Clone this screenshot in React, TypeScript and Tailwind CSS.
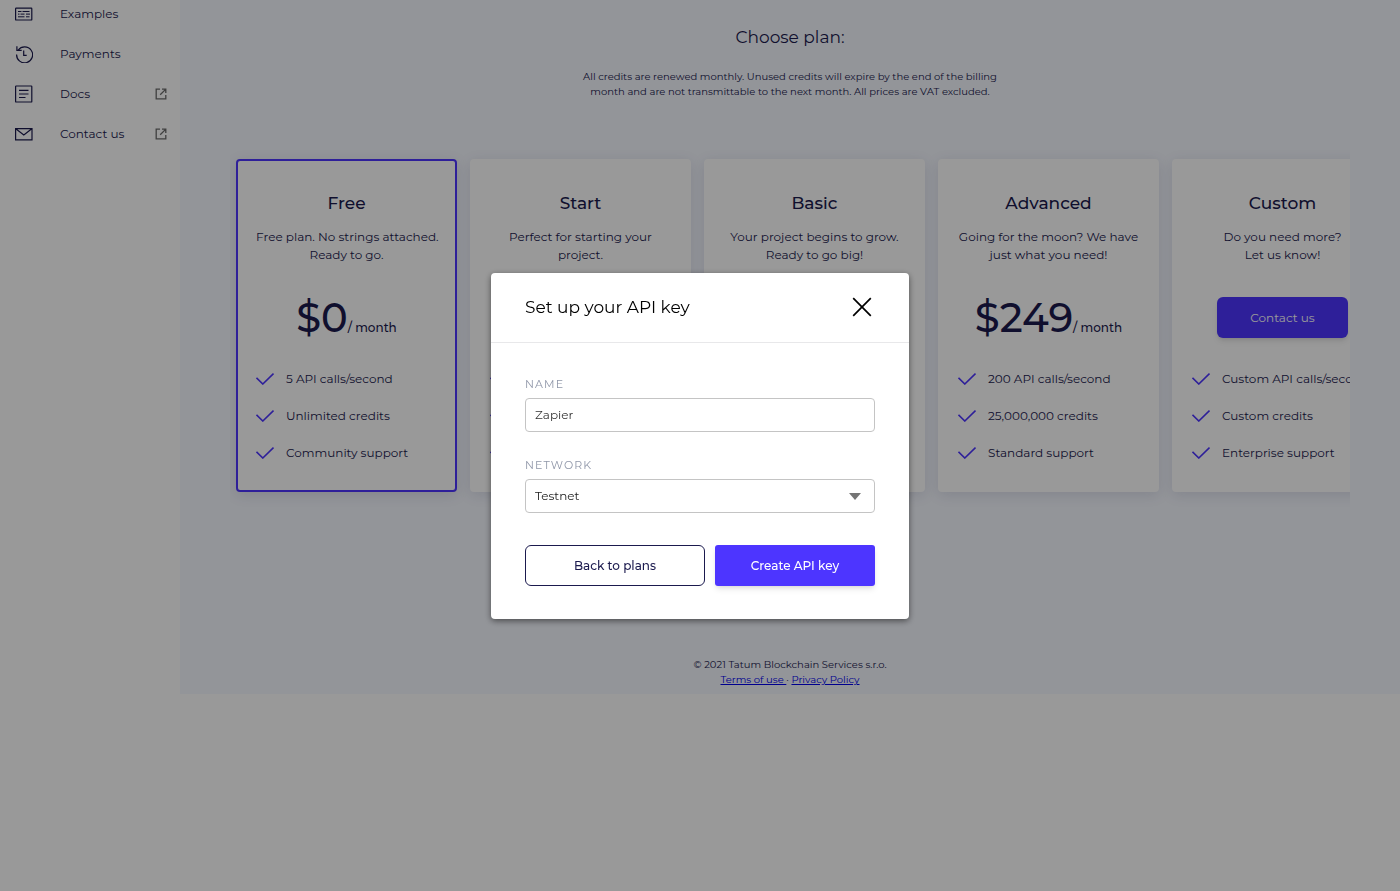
import React, { FC, ReactNode, useState } from "react";

type Plan = {
  name: string;
  text: [string, string];
  price?: string;
  features: string[];
  active?: boolean;
};

const plans: Plan[] = [
  {
    name: "Free",
    text: ["Free plan. No strings attached.", "Ready to go."],
    price: "$0",
    features: ["5 API calls/second", "Unlimited credits", "Community support"],
    active: true,
  },
  {
    name: "Start",
    text: ["Perfect for starting your", "project."],
    price: "$9",
    features: ["10 API calls/second", "1,000,000 credits", "Standard support"],
  },
  {
    name: "Basic",
    text: ["Your project begins to grow.", "Ready to go big!"],
    price: "$49",
    features: ["50 API calls/second", "5,000,000 credits", "Standard support"],
  },
  {
    name: "Advanced",
    text: ["Going for the moon? We have", "just what you need!"],
    price: "$249",
    features: ["200 API calls/second", "25,000,000 credits", "Standard support"],
  },
  {
    name: "Custom",
    text: ["Do you need more?", "Let us know!"],
    features: ["Custom API calls/second", "Custom credits", "Enterprise support"],
  },
];

const Icon: FC<{ children: ReactNode }> = ({ children }) => (
  <svg width="18" height="18" viewBox="0 0 18 18" fill="none" stroke="currentColor" strokeWidth="1.2" className="shrink-0" aria-hidden="true">
    {children}
  </svg>
);

const links = [
  {
    label: "Examples",
    icon: (
      <Icon>
        <rect x="0.6" y="3.2" width="16.2" height="11.8" rx="0.6" />
        <path d="M3 6.5h3.5M7.5 6.5h7M3 9.1h1.5M5.5 9.1h4M11 9.1h4M3 11.8h6.5M11 11.8h3.5" strokeWidth="1" />
      </Icon>
    ),
  },
  {
    label: "Payments",
    icon: (
      <Icon>
        <path d="M3.2 5A8 8 0 1 1 1.6 9.5M1.9 1.2v4.2h4.8M8.7 5.6v4.8h3" />
      </Icon>
    ),
  },
  {
    label: "Docs",
    external: true,
    icon: (
      <Icon>
        <rect x="0.6" y="1" width="16.2" height="16" rx="0.6" />
        <path d="M4 5.4h9.5M4 9h9.5M4 12.5h6.5" />
      </Icon>
    ),
  },
  {
    label: "Contact us",
    external: true,
    icon: (
      <Icon>
        <path d="M0.6 3.6h16.4v11.2H0.6zM0.8 3.8L8.8 10l8-6.2" />
      </Icon>
    ),
  },
];

const Sidebar: FC = () => (
  <aside className="w-[180px] shrink-0 bg-white">
    <nav className="flex flex-col gap-5 pt-1 pr-[13px] pl-[15px]">
      {links.map((link) => (
        <a key={link.label} href="#" className="flex h-5 items-center text-xs">
          {link.icon}
          <span className="ml-[27px] grow">{link.label}</span>
          {link.external && (
            <svg width="12" height="12" viewBox="0 0 12 12" fill="none" stroke="#6b6b6b" strokeWidth="1.3" aria-hidden="true">
              <path d="M5 1.2H1.2v9.6h9.6V7M7 1.2h3.8V5M10.6 1.4L5.2 6.8" />
            </svg>
          )}
        </a>
      ))}
    </nav>
  </aside>
);

const PlanCard: FC<{ plan: Plan }> = ({ plan }) => (
  <section
    className={`w-[221px] shrink-0 rounded border-2 bg-white px-[18px] pt-[30px] pb-[27px] shadow-[0_3px_14px_rgba(30,35,80,0.12)] ${
      plan.active ? "border-[#4d35ff]" : "border-white"
    }`}
  >
    <h2 className="text-center text-[17px] leading-6 font-medium">{plan.name}</h2>
    <p className="mt-[13px] text-center text-xs leading-[18px] whitespace-nowrap">
      {plan.text[0]}
      <br />
      {plan.text[1]}
    </p>
    <div className="mt-[33px] flex h-[41px] items-baseline justify-center">
      {plan.price ? (
        <>
          <span className="text-[40px] leading-[41px] font-medium">{plan.price}</span>
          <span className="text-xs font-medium">/ month</span>
        </>
      ) : (
        <button type="button" className="h-[41px] w-[131px] rounded-md bg-[#4d35ff] text-xs text-white shadow-md">
          Contact us
        </button>
      )}
    </div>
    <ul className="mt-[31px] flex flex-col gap-[17px]">
      {plan.features.map((feature) => (
        <li key={feature} className="flex h-5 items-center gap-3 text-xs whitespace-nowrap">
          <svg width="18" height="12" viewBox="0 0 18 12" fill="none" stroke="#4d35ff" strokeWidth="1.6" className="shrink-0" aria-hidden="true">
            <path d="M0.5 4.8L6.8 11L17.5 0.6" />
          </svg>
          {feature}
        </li>
      ))}
    </ul>
  </section>
);

const ApiKeyModal: FC = () => {
  const [name, setName] = useState<string>("Zapier");
  return (
    <div className="fixed inset-0 flex items-center justify-center bg-black/40">
      <form
        role="dialog"
        aria-labelledby="modal-title"
        onSubmit={(e) => e.preventDefault()}
        className="w-[418px] rounded bg-white shadow-[0_2px_6px_rgba(0,0,0,0.5)]"
      >
        <div className="flex h-[70px] items-center justify-between border-b border-[#e8e8ea] pr-[37px] pl-[34px]">
          <h1 id="modal-title" className="pt-0.5 text-[17px] text-black">Set up your API key</h1>
          <button type="button" aria-label="Close" className="text-black">
            <svg width="20" height="20" viewBox="0 0 20 20" fill="none" stroke="currentColor" strokeWidth="1.7" aria-hidden="true">
              <path d="M1.2 1.2l17.6 17.6M18.8 1.2L1.2 18.8" />
            </svg>
          </button>
        </div>
        <div className="px-[34px] py-[33px]">
          <label htmlFor="name" className="block text-[11px] leading-4 tracking-widest text-[#8f96a8]">NAME</label>
          <input
            id="name"
            value={name}
            onChange={(e) => setName(e.target.value)}
            className="mt-1.5 block h-[34px] w-full rounded border border-[#c4c4c4] px-[9px] text-xs text-[#333]"
          />
          <label htmlFor="network" className="mt-[25px] block text-[11px] leading-4 tracking-widest text-[#8f96a8]">NETWORK</label>
          <div className="relative mt-1.5">
            <select id="network" className="block h-[34px] w-full appearance-none rounded border border-[#c4c4c4] bg-white px-[9px] text-xs text-[#222]">
              <option>Testnet</option>
              <option>Mainnet</option>
            </select>
            <svg width="12" height="7" viewBox="0 0 12 7" className="pointer-events-none absolute top-3.5 right-3.5" aria-hidden="true">
              <path d="M0 0h12L6 7z" fill="#757575" />
            </svg>
          </div>
          <div className="mt-8 flex gap-2.5 text-xs font-medium">
            <button type="button" className="h-[41px] w-[180px] rounded-md border border-[#1b1a4e] pt-0.5">Back to plans</button>
            <button type="submit" className="h-[41px] grow rounded-[3px] bg-[#4d35ff] pt-0.5 text-white shadow-md">Create API key</button>
          </div>
        </div>
      </form>
    </div>
  );
};

const App: FC = () => (
  <div className="min-h-screen bg-white font-['Montserrat','Inter',sans-serif] text-[#1b1a4e]">
    <div className="flex">
      <Sidebar />
      <main className="min-w-0 grow bg-[#f5f8ff] px-[50px] pt-[25px] pb-[7px]">
        <h1 className="text-center text-[17px] leading-6">Choose plan:</h1>
        <p className="mt-5 text-center text-[10px] leading-[15px]">
          All credits are renewed monthly. Unused credits will expire by the end of the billing
          <br />
          month and are not transmittable to the next month. All prices are VAT excluded.
        </p>
        <div className="mt-10 flex gap-[13px] overflow-hidden py-5 pl-1.5">
          {plans.map((plan) => (
            <PlanCard key={plan.name} plan={plan} />
          ))}
        </div>
        <footer className="mt-[145px] text-center text-[10px] leading-[15px]">
          <p>© 2021 Tatum Blockchain Services s.r.o.</p>
          <p>
            <a href="#" className="text-[#0000ee] underline">Terms of use </a>
            {" · "}
            <a href="#" className="text-[#0000ee] underline">Privacy Policy</a>
          </p>
        </footer>
      </main>
    </div>
    <ApiKeyModal />
  </div>
);

export default App;
